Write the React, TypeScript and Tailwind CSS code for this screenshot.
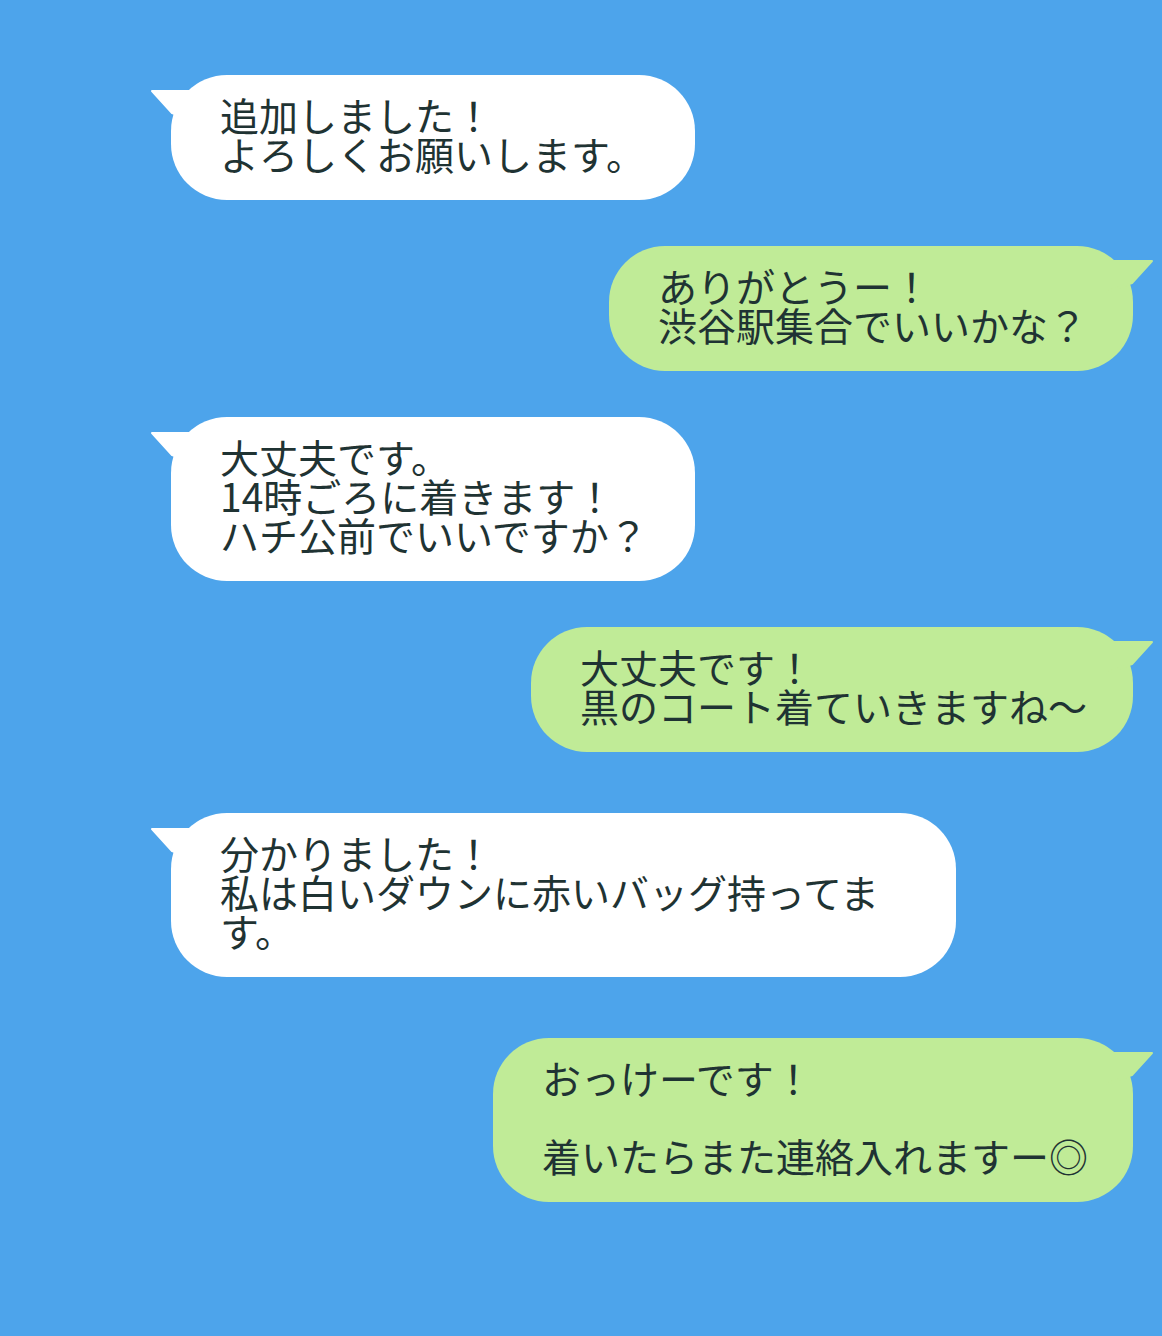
import React from 'react';

type Msg = { side: 'left' | 'right'; width: number; lines: string[]; mt: string };

const messages: Msg[] = [
  { side: 'left', width: 524, lines: ['追加しました！', 'よろしくお願いします。'], mt: 'mt-[75px]' },
  { side: 'right', width: 524, lines: ['ありがとうー！', '渋谷駅集合でいいかな？'], mt: 'mt-[46px]' },
  { side: 'left', width: 524, lines: ['大丈夫です。', '14時ごろに着きます！', 'ハチ公前でいいですか？'], mt: 'mt-[46px]' },
  { side: 'right', width: 602, lines: ['大丈夫です！', '黒のコート着ていきますね〜'], mt: 'mt-[46px]' },
  { side: 'left', width: 785, lines: ['分かりました！', '私は白いダウンに赤いバッグ持ってま', 'す。'], mt: 'mt-[61px]' },
  { side: 'right', width: 640, lines: ['おっけーです！', '', '着いたらまた連絡入れますー◎'], mt: 'mt-[61px]' },
];

function Tail({ side }: { side: 'left' | 'right' }) {
  const fill = side === 'left' ? '#ffffff' : '#c0eb97';
  if (side === 'left') {
    return (
      <svg
        className="absolute left-[-21px] top-[15px]"
        width="50"
        height="40"
        viewBox="0 0 50 40"
      >
        <path d="M2 1 L48 1 L48 32 L22 23 Z" fill={fill} stroke={fill} strokeWidth="2" strokeLinejoin="round" />
      </svg>
    );
  }
  return (
    <svg
      className="absolute right-[-21px] top-[14px]"
      width="50"
      height="40"
      viewBox="0 0 50 40"
    >
      <path d="M48 1 L2 1 L2 32 L28 23 Z" fill={fill} stroke={fill} strokeWidth="2" strokeLinejoin="round" />
    </svg>
  );
}

function Bubble({ msg }: { msg: Msg }) {
  const isLeft = msg.side === 'left';
  return (
    <div
      className={`relative ${msg.mt} ${isLeft ? 'self-start ml-[171px] bg-white' : 'self-end mr-[29px] bg-[#c0eb97]'} rounded-[56px] pl-[49px] pt-[20px] pb-[27px]`}
      style={{ width: msg.width }}
    >
      <Tail side={msg.side} />
      <div className="relative text-[39px] font-normal leading-[39px] text-[#1f3333] whitespace-nowrap">
        {msg.lines.map((line, i) => (
          <div key={i} className="h-[39px]">
            {line}
          </div>
        ))}
      </div>
    </div>
  );
}

export default function App() {
  return (
    <div
      className="min-h-[1336px] w-full bg-[#4da4eb] flex flex-col"
      style={{ fontFamily: '"Noto Sans CJK JP", "Noto Sans", sans-serif' }}
    >
      {messages.map((m, i) => (
        <Bubble key={i} msg={m} />
      ))}
    </div>
  );
}
